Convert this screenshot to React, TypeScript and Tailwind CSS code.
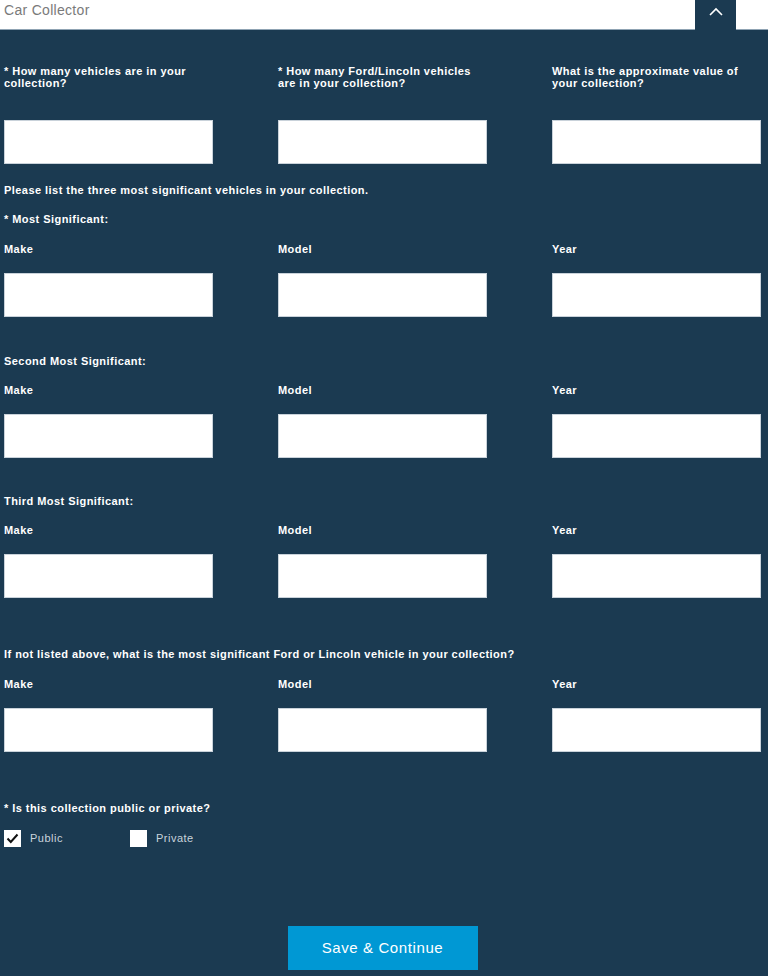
import React from "react";

const font = { fontFamily: '"Liberation Sans", Arial, sans-serif' };

function Input() {
  return <div className="h-[44px] w-[209px] bg-white border border-[#c9d2da]" />;
}

function Label({ children, className = "" }: { children: React.ReactNode; className?: string }) {
  return (
    <div className={`text-[11px] leading-[12px] font-bold tracking-[0.45px] text-white ${className}`}>{children}</div>
  );
}

function TripleRow({ top }: { top: string }) {
  return (
    <div className={top}>
      <div className="grid grid-cols-[209px_209px_209px] gap-x-[65px]">
        <Label>Make</Label>
        <Label>Model</Label>
        <Label>Year</Label>
      </div>
      <div className="grid grid-cols-[209px_209px_209px] gap-x-[65px] mt-[18px]">
        <Input />
        <Input />
        <Input />
      </div>
    </div>
  );
}

export default function App() {
  return (
    <div className="w-[768px] h-[976px] bg-[#1b3a51] overflow-hidden" style={font}>
      <div className="h-[30px] bg-white flex items-start justify-between border-b border-[#8fa3b3]">
        <span className="pl-[4px] pt-[1px] text-[14px] leading-[18px] tracking-[0.3px] text-[#7a7a7a]">Car Collector</span>
        <div className="h-[30px] w-[41px] mr-[32px] bg-[#1b3a51] flex items-center justify-center">
          <svg width="16" height="10" viewBox="0 0 16 10" className="-mt-[6px]">
            <path d="M2 8 L8 2 L14 8" fill="none" stroke="#ffffff" strokeWidth="1.6" />
          </svg>
        </div>
      </div>
      <div className="px-[4px]">
        <div className="pt-[35px] grid grid-cols-[209px_209px_209px] gap-x-[65px]">
          <div className="flex flex-col">
            <Label className="h-[55px]">* How many vehicles are in your collection?</Label>
            <Input />
          </div>
          <div className="flex flex-col">
            <Label className="h-[55px]">* How many Ford/Lincoln vehicles are in your collection?</Label>
            <Input />
          </div>
          <div className="flex flex-col">
            <Label className="h-[55px]">What is the approximate value of your collection?</Label>
            <Input />
          </div>
        </div>
        <Label className="mt-[20px]">Please list the three most significant vehicles in your collection.</Label>
        <Label className="mt-[17px]">* Most Significant:</Label>
        <TripleRow top="mt-[18px]" />
        <Label className="mt-[38px]">Second Most Significant:</Label>
        <TripleRow top="mt-[17px]" />
        <Label className="mt-[37px]">Third Most Significant:</Label>
        <TripleRow top="mt-[17px]" />
        <Label className="mt-[50px]">
          If not listed above, what is the most significant Ford or Lincoln vehicle in your collection?
        </Label>
        <TripleRow top="mt-[18px]" />
        <Label className="mt-[50px]">* Is this collection public or private?</Label>
        <div className="mt-[16px] flex items-center">
          <div className="flex items-center w-[126px]">
            <div className="w-[17px] h-[17px] bg-white flex items-center justify-center">
              <svg width="13" height="11" viewBox="0 0 13 11">
                <path d="M1.5 5.5 L4.8 9 L11.5 1.5" fill="none" stroke="#111" strokeWidth="2" />
              </svg>
            </div>
            <span className="ml-[9px] text-[11px] tracking-[0.5px] text-[#c9d3dc]">Public</span>
          </div>
          <div className="flex items-center">
            <div className="w-[17px] h-[17px] bg-white" />
            <span className="ml-[9px] text-[11px] tracking-[0.5px] text-[#c9d3dc]">Private</span>
          </div>
        </div>
        <div className="mt-[79px] flex justify-center">
          <button className="w-[190px] h-[44px] bg-[#0098d4] text-white text-[15px] tracking-[0.6px] ml-[-3px]">
            Save &amp; Continue
          </button>
        </div>
      </div>
    </div>
  );
}
